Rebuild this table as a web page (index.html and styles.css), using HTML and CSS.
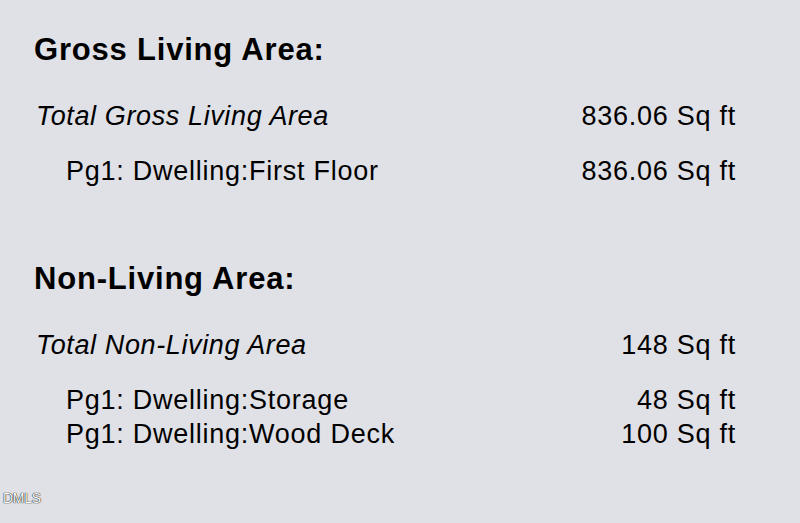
FILE: index.html
```html
<!DOCTYPE html>
<html>
<head>
<meta charset="utf-8">
<link rel="stylesheet" href="styles.css">
</head>
<body>
<main class="page">
  <section class="area">
    <h2 class="area-title">Gross Living Area:</h2>
    <div class="row total"><span class="label">Total Gross Living Area</span><span class="value">836.06 Sq ft</span></div>
    <div class="items">
      <div class="row item"><span class="label">Pg1: Dwelling:First Floor</span><span class="value">836.06 Sq ft</span></div>
    </div>
  </section>
  <section class="area">
    <h2 class="area-title">Non-Living Area:</h2>
    <div class="row total"><span class="label">Total Non-Living Area</span><span class="value">148 Sq ft</span></div>
    <div class="items">
      <div class="row item"><span class="label">Pg1: Dwelling:Storage</span><span class="value">48 Sq ft</span></div>
      <div class="row item"><span class="label">Pg1: Dwelling:Wood Deck</span><span class="value">100 Sq ft</span></div>
    </div>
  </section>
  <div class="watermark">DMLS</div>
</main>
</body>
</html>
```

FILE: styles.css
```css
html, body {
  margin: 0;
  padding: 0;
  background: #e0e1e6;
}
body {
  font-family: "Liberation Sans", Arial, Helvetica, sans-serif;
  color: #000;
}
.page {
  position: relative;
  width: 800px;
  height: 523px;
  box-sizing: border-box;
  padding: 32px 64px 0 34px;
  overflow: hidden;
}
.area {
  display: flex;
  flex-direction: column;
}
.area + .area {
  margin-top: 73px;
}
.area-title {
  margin: 0;
  font-size: 31px;
  line-height: 36px;
  font-weight: bold;
  letter-spacing: 0.8px;
}
.row {
  display: flex;
  justify-content: space-between;
  font-size: 27px;
  line-height: 34px;
  letter-spacing: 0.75px;
}
.total {
  margin-top: 31px;
  padding-left: 2px;
}
.total .label {
  font-style: italic;
  letter-spacing: 0.62px;
}
.items {
  margin-top: 21px;
  padding-left: 32px;
  display: flex;
  flex-direction: column;
}
.watermark {
  position: absolute;
  left: 3px;
  top: 489px;
  font-size: 14px;
  line-height: 18px;
  color: #fff;
  text-shadow: 0 0 1px #000, 0 0 1px #000;
  letter-spacing: -0.3px;
}
```
